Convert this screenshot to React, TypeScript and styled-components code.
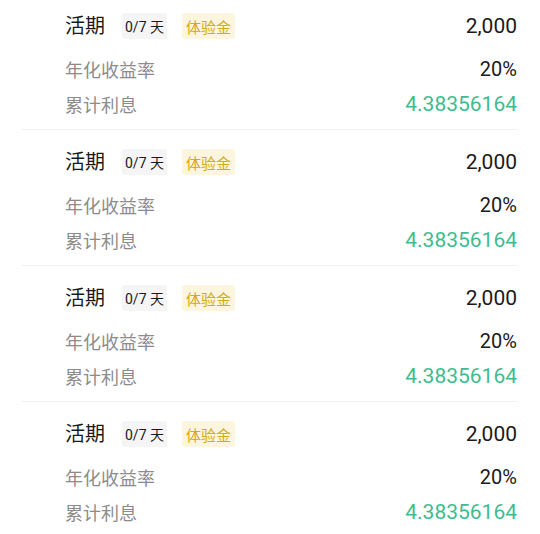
import styled, { createGlobalStyle } from "styled-components";

const GlobalStyle = createGlobalStyle`
  html, body {
    margin: 0;
    padding: 0;
    background: #fff;
  }
  body {
    font-family: Roboto, "Noto Sans CJK SC", sans-serif;
    overflow: hidden;
  }
`;

const List = styled.div`
  margin-top: -6px;
  width: 540px;
`;

const Card = styled.div`
  margin: 0 23px 0 22px;
  padding: 19px 0 8px 43px;
  border-bottom: 1px solid #f0f0f0;
`;

const TitleRow = styled.div`
  display: flex;
  align-items: center;
  height: 26px;
  margin-bottom: 12px;
`;

const Title = styled.div`
  font-size: 20px;
  color: #1a1a1a;
  margin-right: 17px;
  line-height: 26px;
`;

const Tag = styled.div<{ $variant: "gray" | "gold" }>`
  display: flex;
  align-items: center;
  justify-content: center;
  height: 26px;
  padding: 0 ${(p) => (p.$variant === "gold" ? "4px" : "3px")};
  margin-right: 15px;
  border-radius: 3px;
  font-size: ${(p) => (p.$variant === "gold" ? "15px" : "14px")};
  background: ${(p) => (p.$variant === "gold" ? "#fdf6de" : "#f5f5f5")};
  color: ${(p) => (p.$variant === "gold" ? "#d6a824" : "#1a1a1a")};
`;

const Amount = styled.div`
  margin-left: auto;
  font-size: 21px;
  color: #1a1a1a;
`;

const Row = styled.div`
  display: flex;
  align-items: center;
  justify-content: space-between;
  height: 35px;
`;

const Label = styled.div`
  font-size: 18px;
  color: #8c8c8c;
`;

const Value = styled.div<{ $green?: boolean }>`
  font-size: ${(p) => (p.$green ? "21px" : "20px")};
  color: ${(p) => (p.$green ? "#3dbd8e" : "#1a1a1a")};
`;

const items = [1, 2, 3, 4];

export default function App() {
  return (
    <>
      <GlobalStyle />
      <List>
        {items.map((i) => (
          <Card key={i}>
            <TitleRow>
              <Title>活期</Title>
              <Tag $variant="gray">0/7 天</Tag>
              <Tag $variant="gold">体验金</Tag>
              <Amount>2,000</Amount>
            </TitleRow>
            <Row>
              <Label>年化收益率</Label>
              <Value>20%</Value>
            </Row>
            <Row>
              <Label>累计利息</Label>
              <Value $green>4.38356164</Value>
            </Row>
          </Card>
        ))}
      </List>
    </>
  );
}
